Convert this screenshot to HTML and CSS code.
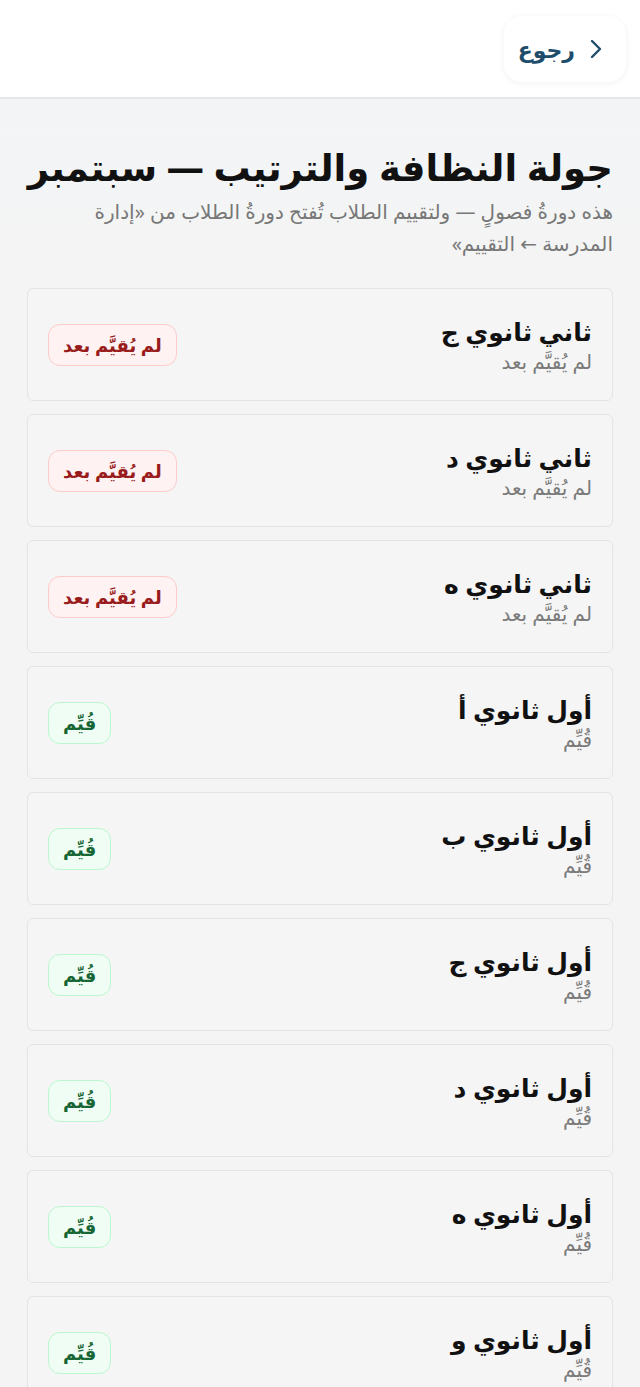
FILE: index.html
```html
<!DOCTYPE html>
<html lang="ar" dir="rtl">
<head>
  <meta charset="UTF-8" />
  <meta name="viewport" content="width=device-width, initial-scale=1.0" />
  <title>جولة النظافة والترتيب</title>
  <link rel="stylesheet" href="styles.css">
</head>
<body>
  <header class="topbar">
    <button class="back-btn">
      <svg class="chev" viewBox="0 0 12 24" width="12" height="24"><path d="M2 4l8 8-8 8" fill="none" stroke="currentColor" stroke-width="2.4" stroke-linecap="round" stroke-linejoin="round"/></svg>
      <span>رجوع</span>
    </button>
  </header>

  <main class="page">
    <h1 class="title">جولة النظافة والترتيب — سبتمبر</h1>
    <p class="subtitle">هذه دورةُ فصولٍ — ولتقييم الطلاب تُفتح دورةُ الطلاب من «إدارة المدرسة ← التقييم»</p>

    <div class="list">
      <div class="card">
        <div class="info"><div class="name">ثاني ثانوي ج</div><div class="state">لم يُقيَّم بعد</div></div>
        <span class="badge pending">لم يُقيَّم بعد</span>
      </div>
      <div class="card">
        <div class="info"><div class="name">ثاني ثانوي د</div><div class="state">لم يُقيَّم بعد</div></div>
        <span class="badge pending">لم يُقيَّم بعد</span>
      </div>
      <div class="card">
        <div class="info"><div class="name">ثاني ثانوي ه</div><div class="state">لم يُقيَّم بعد</div></div>
        <span class="badge pending">لم يُقيَّم بعد</span>
      </div>
      <div class="card">
        <div class="info"><div class="name">أول ثانوي أ</div><div class="state">قُيِّم</div></div>
        <span class="badge done">قُيِّم</span>
      </div>
      <div class="card">
        <div class="info"><div class="name">أول ثانوي ب</div><div class="state">قُيِّم</div></div>
        <span class="badge done">قُيِّم</span>
      </div>
      <div class="card">
        <div class="info"><div class="name">أول ثانوي ج</div><div class="state">قُيِّم</div></div>
        <span class="badge done">قُيِّم</span>
      </div>
      <div class="card">
        <div class="info"><div class="name">أول ثانوي د</div><div class="state">قُيِّم</div></div>
        <span class="badge done">قُيِّم</span>
      </div>
      <div class="card">
        <div class="info"><div class="name">أول ثانوي ه</div><div class="state">قُيِّم</div></div>
        <span class="badge done">قُيِّم</span>
      </div>
      <div class="card">
        <div class="info"><div class="name">أول ثانوي و</div><div class="state">قُيِّم</div></div>
        <span class="badge done">قُيِّم</span>
      </div>
    </div>
  </main>
</body>
</html>
```

FILE: styles.css
```css
body {
  margin: 0;
  font-family: 'Noto Sans', 'DejaVu Sans', sans-serif;
  background: linear-gradient(#f1f5f8 0, #f4f4f4 260px);
  background-color: #f4f4f4;
  color: #111;
}
.topbar {
  height: 97px;
  background-color: #fff;
  border-bottom: 2px solid #e5e7eb;
  display: flex;
  align-items: center;
  padding: 0 14px;
}
.back-btn {
  display: flex;
  align-items: center;
  gap: 15px;
  height: 66px;
  padding: 0 24px 0 14px;
  background-color: #fff;
  border: none;
  border-radius: 18px;
  box-shadow: 0 1px 6px rgba(0, 0, 0, 0.06);
  color: #1e4d6b;
  font-family: inherit;
  font-size: 22px;
  font-weight: 600;
  cursor: pointer;
}
.page {
  padding: 44px 27px 40px;
}
.title {
  margin: 0;
  font-size: 37px;
  font-weight: 800;
  line-height: 1.3;
}
.subtitle {
  margin: 5px 0 28px;
  font-size: 20px;
  line-height: 32px;
  color: #777;
}
.list {
  display: flex;
  flex-direction: column;
  gap: 13px;
}
.card {
  display: flex;
  align-items: center;
  justify-content: space-between;
  height: 113px;
  box-sizing: border-box;
  padding: 0 20px;
  background-color: #f5f5f5;
  border: 1px solid #e4e4e4;
  border-radius: 6px;
}
.name {
  font-size: 25px;
  font-weight: 700;
  line-height: 34px;
}
.state {
  font-size: 20px;
  color: #7a7a7a;
  line-height: 28px;
}
.badge {
  display: inline-flex;
  align-items: center;
  height: 42px;
  box-sizing: border-box;
  padding: 0 14px;
  border-radius: 12px;
  font-size: 18px;
  font-weight: 700;
}
.badge.pending {
  background-color: #fef2f2;
  border: 1px solid #fecaca;
  color: #991b1b;
}
.badge.done {
  background-color: #f0fdf4;
  border: 1px solid #bbf7d0;
  color: #166534;
}
```
